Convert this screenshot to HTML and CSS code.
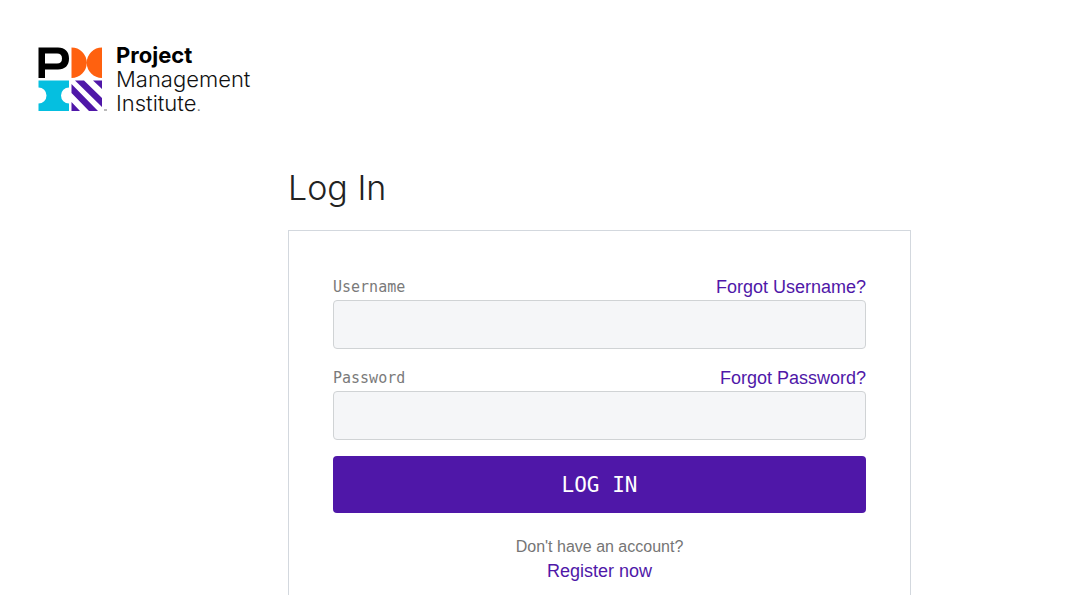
FILE: index.html
```html
<!DOCTYPE html>
<html lang="en">
<head>
<meta charset="utf-8">
<meta name="viewport" content="width=device-width, initial-scale=1">
<title>Log In</title>
<link rel="stylesheet" href="styles.css">
</head>
<body>
<header class="site-header">
  <svg class="logo-mark" viewBox="0 0 70 64" aria-hidden="true">
    <path fill="#000" fill-rule="evenodd" d="M0.500 0.500H20C27 0.500 31 4.500 31 11.500S27 22.500 20 22.500H7V31H0.500ZM7 6.500V16.500H19Q24 16.500 24 11.500T19 6.500Z"/>
    <path fill="#ff610f" d="M33.500 0.500A15.200 15.200 0 0 1 33.500 31ZM64 0.500A15.200 15.200 0 0 0 64 31Z"/>
    <path fill="#05bfe0" d="M0.500 33.500H31V40.500A8 8 0 0 0 31 56.500V64H0.500V56.500A8 8 0 0 0 0.500 40.500Z"/>
    <path fill="#4f17a8" d="M37 33.500H46L64 51V60ZM55 33.500H64V42ZM33.500 37L60 64H51L33.500 46ZM33.500 55L42 64H33.500Z"/>
    <path d="M66 63H69" stroke="#777" stroke-width="1"/>
  </svg>
  <p class="logo-name"><strong>Project</strong><span>Management</span><span>Institute<small>.</small></span></p>
</header>
<main class="login">
  <h1 class="login-title">Log In</h1>
  <form class="card">
    <div class="field">
      <div class="field-head"><label for="username">Username</label><a href="#">Forgot Username?</a></div>
      <input id="username" name="username" type="text">
    </div>
    <div class="field">
      <div class="field-head"><label for="password">Password</label><a href="#">Forgot Password?</a></div>
      <input id="password" name="password" type="password">
    </div>
    <button class="submit" type="submit">LOG IN</button>
    <p class="register">Don't have an account?<a href="#">Register now</a></p>
  </form>
</main>
</body>
</html>
```
FILE: styles.css
```css
* { box-sizing: border-box; }
body {
  display: flex;
  flex-direction: column;
  min-height: 100vh;
  margin: 0;
  background: #fff;
  font-family: "Liberation Sans", Arial, sans-serif;
}
.site-header {
  display: flex;
  gap: 8px;
  padding: 43px 38px 0;
}
.logo-mark {
  width: 70px;
  height: 64px;
  margin-top: 4px;
}
.logo-name {
  display: flex;
  flex-direction: column;
  margin: 0;
  color: #111;
  font: 300 22px/24px Inter, sans-serif;
}
.logo-name strong { font-weight: 700; color: #000; }
.logo-name small { font-size: 16px; color: #777; }
.login {
  display: flex;
  flex: 1;
  flex-direction: column;
  margin: 51px 169px 0 288px;
}
.login-title {
  margin: 0 0 22px;
  color: #222;
  font: 300 34px/40px Inter, sans-serif;
}
.card {
  flex: 1;
  padding: 43px 44px 8px;
  border: 1px solid #d3d8de;
  border-bottom: 0;
}
.field { margin-bottom: 16px; }
.field-head {
  display: flex;
  align-items: center;
  justify-content: space-between;
  height: 26px;
}
.field label {
  color: #7a7a7a;
  font: 400 15px/24px "DejaVu Sans Mono", monospace;
}
a {
  color: #4f17a8;
  font-size: 18px;
  line-height: 24px;
  text-decoration: none;
}
.field input {
  display: block;
  width: 100%;
  height: 49px;
  padding: 0 12px;
  border: 1px solid #d0d3d5;
  border-radius: 4px;
  background: #f5f6f8;
  font-size: 18px;
}
.submit {
  display: block;
  width: 100%;
  height: 57px;
  border: 0;
  border-radius: 4px;
  background: #4f17a8;
  color: #fff;
  font: 400 21px/24px "DejaVu Sans Mono", monospace;
}
.register {
  display: flex;
  flex-direction: column;
  align-items: center;
  margin: 22px 0 0;
  color: #757575;
  font-size: 16px;
  line-height: 24px;
}
```
